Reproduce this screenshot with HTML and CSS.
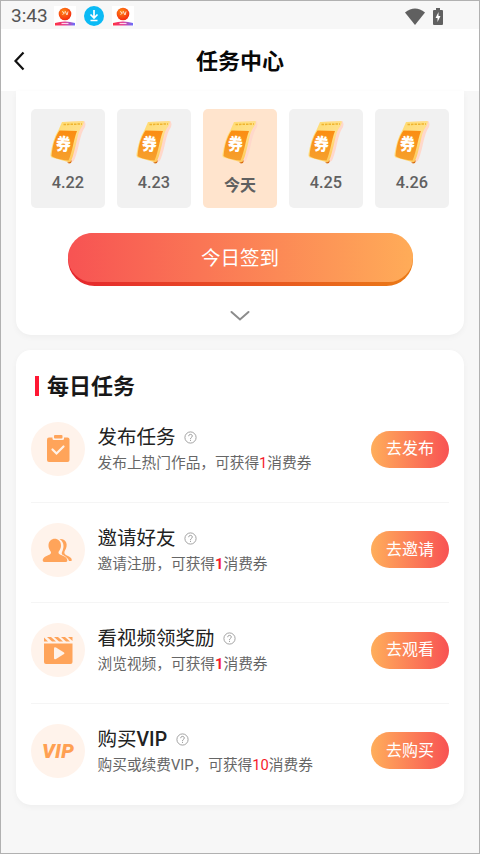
FILE: index.html
```html
<!DOCTYPE html>
<html lang="zh-CN">
<head>
<meta charset="utf-8">
<title>任务中心</title>
<link rel="stylesheet" href="styles.css">
</head>
<body>
<svg class="defs" aria-hidden="true">
  <defs>
    <linearGradient id="paper" x1="0" y1="0" x2="1" y2="1"><stop offset="0" stop-color="#ffda6b"/><stop offset=".55" stop-color="#ffe08a"/><stop offset="1" stop-color="#ffb52e"/></linearGradient>
    <linearGradient id="face" x1="0" y1="0" x2="0" y2="1"><stop offset="0" stop-color="#fb8d12"/><stop offset="1" stop-color="#f6a02d"/></linearGradient>
    <radialGradient id="ball" cx=".4" cy=".3" r=".7"><stop offset="0" stop-color="#ff8a12"/><stop offset="1" stop-color="#f52b10"/></radialGradient>
    <linearGradient id="ribbon"><stop offset="0" stop-color="#ff3340"/><stop offset=".5" stop-color="#e63790"/><stop offset="1" stop-color="#6670ff"/></linearGradient>
    <symbol id="coupon" viewBox="0 0 38 44">
      <path d="M15 2 35.500 1q1.500 2 .5 6C32.500 12 31.500 18 29.500 26q-2 9-4.500 14.500-2 2-4 1L3 36Z" fill="#ffd8cb"/>
      <path d="M13 2 34.500 1q1 2-1 5c-5 6-5 13-7 20-2 8-3 13-5.500 16.500L2.500 37.500q-1.500-1-1-3.500C3 25 5 17 9.500 10Z" fill="url(#paper)"/>
      <path d="M14.500 4.500 33 4" stroke="#efb42f" stroke-width="1.500" stroke-dasharray="2.500 1"/>
      <path d="M10.500 10.500 28 11C24.500 20 23.500 32 19.500 40.500 13 40 6 38.500 2.500 36 3.500 26 5.500 18 10.500 10.500Z" fill="url(#face)"/>
      <path d="m18 42.500 3-.500 2-2-1 3-2 .5Z" fill="#d96b08"/>
      <text class="coupon-text" transform="translate(6.500 30) rotate(4) scale(.93 1.080)">券</text>
    </symbol>
    <symbol id="app" viewBox="0 0 22 20">
      <path d="M0 0h22v20H0Z" fill="#fff"/>
      <circle cx="11" cy="8" r="6.300" fill="url(#ball)"/>
      <path d="m8 5.500 2.500 1.500-2 1.500M11 5l2 4 1-3.500" fill="none" stroke="#ffe9df" stroke-width=".9"/>
      <path d="M1 17q10-3 20 0v2.500H1Z" fill="url(#ribbon)"/>
      <path d="M7.500 17.500h7" stroke="#fff" stroke-opacity=".8" stroke-width="1.200"/>
    </symbol>
    <symbol id="help" viewBox="0 0 13 13">
      <circle cx="6.500" cy="6.500" r="5.600" fill="none" stroke="#999" stroke-width=".9"/>
      <path d="M4.700 5.200c0-2.500 3.600-2.300 3.600-.2 0 1.400-1.800 1.400-1.800 2.900M6.500 8.800v1.100" fill="none" stroke="#999" stroke-width="1"/>
    </symbol>
  </defs>
</svg>
<div class="screen">
  <div class="status">
    <span class="clock">3:43</span>
    <svg class="app" width="22" height="20"><use href="#app"/></svg>
    <svg class="download" width="20" height="20" viewBox="0 0 20 20"><circle cx="10" cy="10" r="10" fill="#0bbaf5"/><path d="M10 4v8M6.500 8.500 10 12l3.500-3.500M6.500 14.500h7" fill="none" stroke="#fff" stroke-width="1.700"/></svg>
    <svg class="app" width="22" height="20"><use href="#app"/></svg>
    <svg class="wifi" width="20" height="17" viewBox="0 0 20 17"><path d="M0 4.500Q10-3.500 20 4.500L10 17Z" fill="#606060"/></svg>
    <svg class="battery" width="10" height="17" viewBox="0 0 10 17"><path d="M3 0h4v2h2q1 0 1 1v13q0 1-1 1H1q-1 0-1-1V3q0-1 1-1h2Z" fill="#606060"/><path d="M5.500 4 2.500 10h2v4l3-6h-2Z" fill="#fff"/></svg>
  </div>
  <header class="header">
    <svg class="back" width="12" height="20" viewBox="0 0 12 20"><path d="m10.500 1.500-8 8.500 8 8.500" fill="none" stroke="#111" stroke-width="2.200"/></svg>
    <h1 class="title">任务中心</h1>
  </header>
  <main class="content">
    <section class="card signin">
      <div class="days">
        <div class="day"><svg width="38" height="44"><use href="#coupon"/></svg><span>4.22</span></div>
        <div class="day"><svg width="38" height="44"><use href="#coupon"/></svg><span>4.23</span></div>
        <div class="day today"><svg width="38" height="44"><use href="#coupon"/></svg><span>今天</span></div>
        <div class="day"><svg width="38" height="44"><use href="#coupon"/></svg><span>4.25</span></div>
        <div class="day"><svg width="38" height="44"><use href="#coupon"/></svg><span>4.26</span></div>
      </div>
      <button class="sign-button"><span>今日签到</span></button>
      <svg class="expand" width="20" height="12" viewBox="0 0 20 12"><path d="m1.500 2 8.500 7.500L18.500 2" fill="none" stroke="#8c8c8c" stroke-width="2" stroke-linecap="round"/></svg>
    </section>
    <section class="card tasks">
      <h2 class="section-title">每日任务</h2>
      <div class="task">
        <div class="icon"><svg width="54" height="54" viewBox="0 0 54 54"><rect x="16" y="15.500" width="22.500" height="24.500" rx="2" fill="#ffa45a"/><rect x="21.500" y="12" width="11.500" height="6" rx="1.500" fill="#fff2e9"/><rect x="23" y="13" width="8.500" height="3.500" rx="1" fill="#ffa45a"/><path d="m21.500 27.500 4 4 7-7" fill="none" stroke="#fff2e9" stroke-width="2.200" stroke-linecap="round"/></svg></div>
        <div class="copy"><h3>发布任务<svg width="13" height="13"><use href="#help"/></svg></h3><p>发布上热门作品，可获得<em>1</em>消费券</p></div>
        <button class="go">去发布</button>
      </div>
      <div class="task">
        <div class="icon"><svg width="54" height="54" viewBox="0 0 54 54" fill="#ffa45a"><path d="M28.500 16c7-.5 9 6 5.500 11.500-1.500 3 0 4 3 5.500 4 2 4 3.500 3.500 5H38c-1-3-3-4-6-6-3-1.500.5-4 .5-9 0-3-1.500-5.500-4-7Z"/><path d="M17.500 22.500c0-9 12.500-9 12.500 0 0 4-2.500 5.500-2.500 7 0 2 3 2.500 6 4 3.500 2 3.500 5.500 1.500 5.500H13.500c-2.500 0-2.500-3.500 1-5.500 3-1.500 5.500-2 5.500-4 0-1.500-2.500-3-2.500-7Z"/></svg></div>
        <div class="copy"><h3>邀请好友<svg width="13" height="13"><use href="#help"/></svg></h3><p>邀请注册，可获得<em class="bold">1</em>消费券</p></div>
        <button class="go">去邀请</button>
      </div>
      <div class="task">
        <div class="icon"><svg width="54" height="54" viewBox="0 0 54 54" fill="#ffa45a"><path d="M13 14.500 17 18.500H13ZM16 14h4l5 4.500h-4ZM23 14h4l5 4.500h-4ZM30 14h4l5 4.500h-4ZM37 14h4.500v4Z"/><path d="M13 20.500h28.500V39q0 2-2 2H15q-2 0-2-2Z"/><path d="M23 25.500q0-2 2-1l8 5q1 .8 0 1.500l-8 5q-2 1-2-1Z" fill="#fff2e9"/></svg></div>
        <div class="copy"><h3>看视频领奖励<svg width="13" height="13"><use href="#help"/></svg></h3><p>浏览视频，可获得<em class="bold">1</em>消费券</p></div>
        <button class="go">去观看</button>
      </div>
      <div class="task">
        <div class="icon"><span class="vip">VIP</span></div>
        <div class="copy"><h3><span>购买<b>VIP</b></span><svg width="13" height="13"><use href="#help"/></svg></h3><p>购买或续费VIP，可获得<em>10</em>消费券</p></div>
        <button class="go">去购买</button>
      </div>
    </section>
  </main>
</div>
</body>
</html>
```
FILE: styles.css
```css
* { box-sizing: border-box; }
body, h1, h2, h3, p { margin: 0; }
body { font-family: Roboto, "Noto Sans CJK SC", sans-serif; }
button { border: 0; padding: 0; font-family: inherit; color: #fff; }
svg { display: block; flex: none; }
.defs { position: absolute; width: 0; height: 0; }
.screen { width: 480px; height: 854px; border: 1px solid #b1b1b1; background: #f7f7f7; overflow: hidden; }
.status { height: 28px; display: flex; align-items: center; padding: 2px 36px 0 10px; }
.clock { width: 43px; font-size: 19px; line-height: 24px; color: #555; }
.download { margin: 0 8px 0 8px; }
.app { margin-top: -1px; }
.wifi { margin-left: auto; }
.battery { margin-left: 8px; }
.header { height: 62px; background: #fff; display: grid; grid-template-columns: 40px 1fr 40px; align-items: center; }
.back { margin: 1px 0 0 12px; }
.title { text-align: center; font-size: 22px; line-height: 32px; font-weight: 700; color: #080808; padding-top: 4px; }
.content { padding: 0 15px; }
.card { background: #fff; border-radius: 0 0 15px 15px; box-shadow: 0 2px 6px #0000000a; }
.signin { height: 244px; padding: 18px 15px 0; display: flex; flex-direction: column; align-items: center; }
.days { width: 418px; display: grid; grid-template-columns: repeat(5, 74px); justify-content: space-between; }
.day { height: 99px; border-radius: 5px; background: #f1f1f1; display: flex; flex-direction: column; align-items: center; padding-top: 11px; color: #606060; font-size: 16.300px; font-weight: 500; line-height: 20px; }
.day span { margin-top: 9px; }
.today { background: #ffe4cd; }
.today span { font-size: 16px; font-weight: 700; margin-top: 12px; }
.coupon-text { font: 900 16px "Noto Sans CJK SC", sans-serif; fill: #fff; }
.sign-button { width: 345px; height: 53px; margin-top: 25px; border-radius: 27px; padding-bottom: 4px; background: linear-gradient(90deg, #e5262e, #ea7a16); }
.sign-button span { display: block; height: 49px; border-radius: 25px; background: linear-gradient(90deg, #f75353, #ffac58); font-size: 19.500px; line-height: 52px; }
.expand { margin-top: 23.500px; }
.tasks { margin-top: 15px; height: 455px; border-radius: 15px; padding: 22px 15px 0; }
.section-title { display: flex; align-items: center; height: 28px; padding: 2px 0 0 4px; font-size: 22px; line-height: 28px; color: #181818; }
.section-title::before { content: ""; width: 4px; height: 20px; margin: -3px 8px 0 0; background: #ff1733; }
.task { height: 100.600px; padding-top: 22px; display: flex; border-bottom: 1px solid #f5f5f5; }
.section-title + .task { height: 102.500px; }
.task:last-child { border-bottom: 0; }
.icon { width: 54px; height: 54px; border-radius: 50%; background: #fff3eb; flex: none; display: grid; place-items: center; }
.task > .icon { margin-top: -2px; }
.section-title + .task > .icon { margin-top: 0; }
.copy { flex: 1; padding-left: 12.500px; }
.task > .copy { margin-top: 0; }
.section-title + .task > .copy { margin-top: 2px; }
.copy h3 { display: flex; align-items: center; gap: 8.500px; font-size: 19.500px; line-height: 28px; font-weight: 400; color: #222; }
.copy h3 svg { margin-top: -1px; }
.copy h3 b { font-weight: 500; }
.copy p { font-size: 14.700px; line-height: 22px; color: #666; white-space: nowrap; }
.copy em { color: #f61b2b; font-style: normal; }
.copy .bold { font-weight: 700; }
.go { width: 78px; height: 37px; margin-top: 6.500px; border-radius: 19px; background: linear-gradient(90deg, #ffae5b, #f85253); font-size: 16px; line-height: 36px; }
.section-title + .task > .go { margin-top: 8.500px; }
.vip { font: italic 900 20px Roboto, sans-serif; letter-spacing: .3px; color: #ffa052; }
```
